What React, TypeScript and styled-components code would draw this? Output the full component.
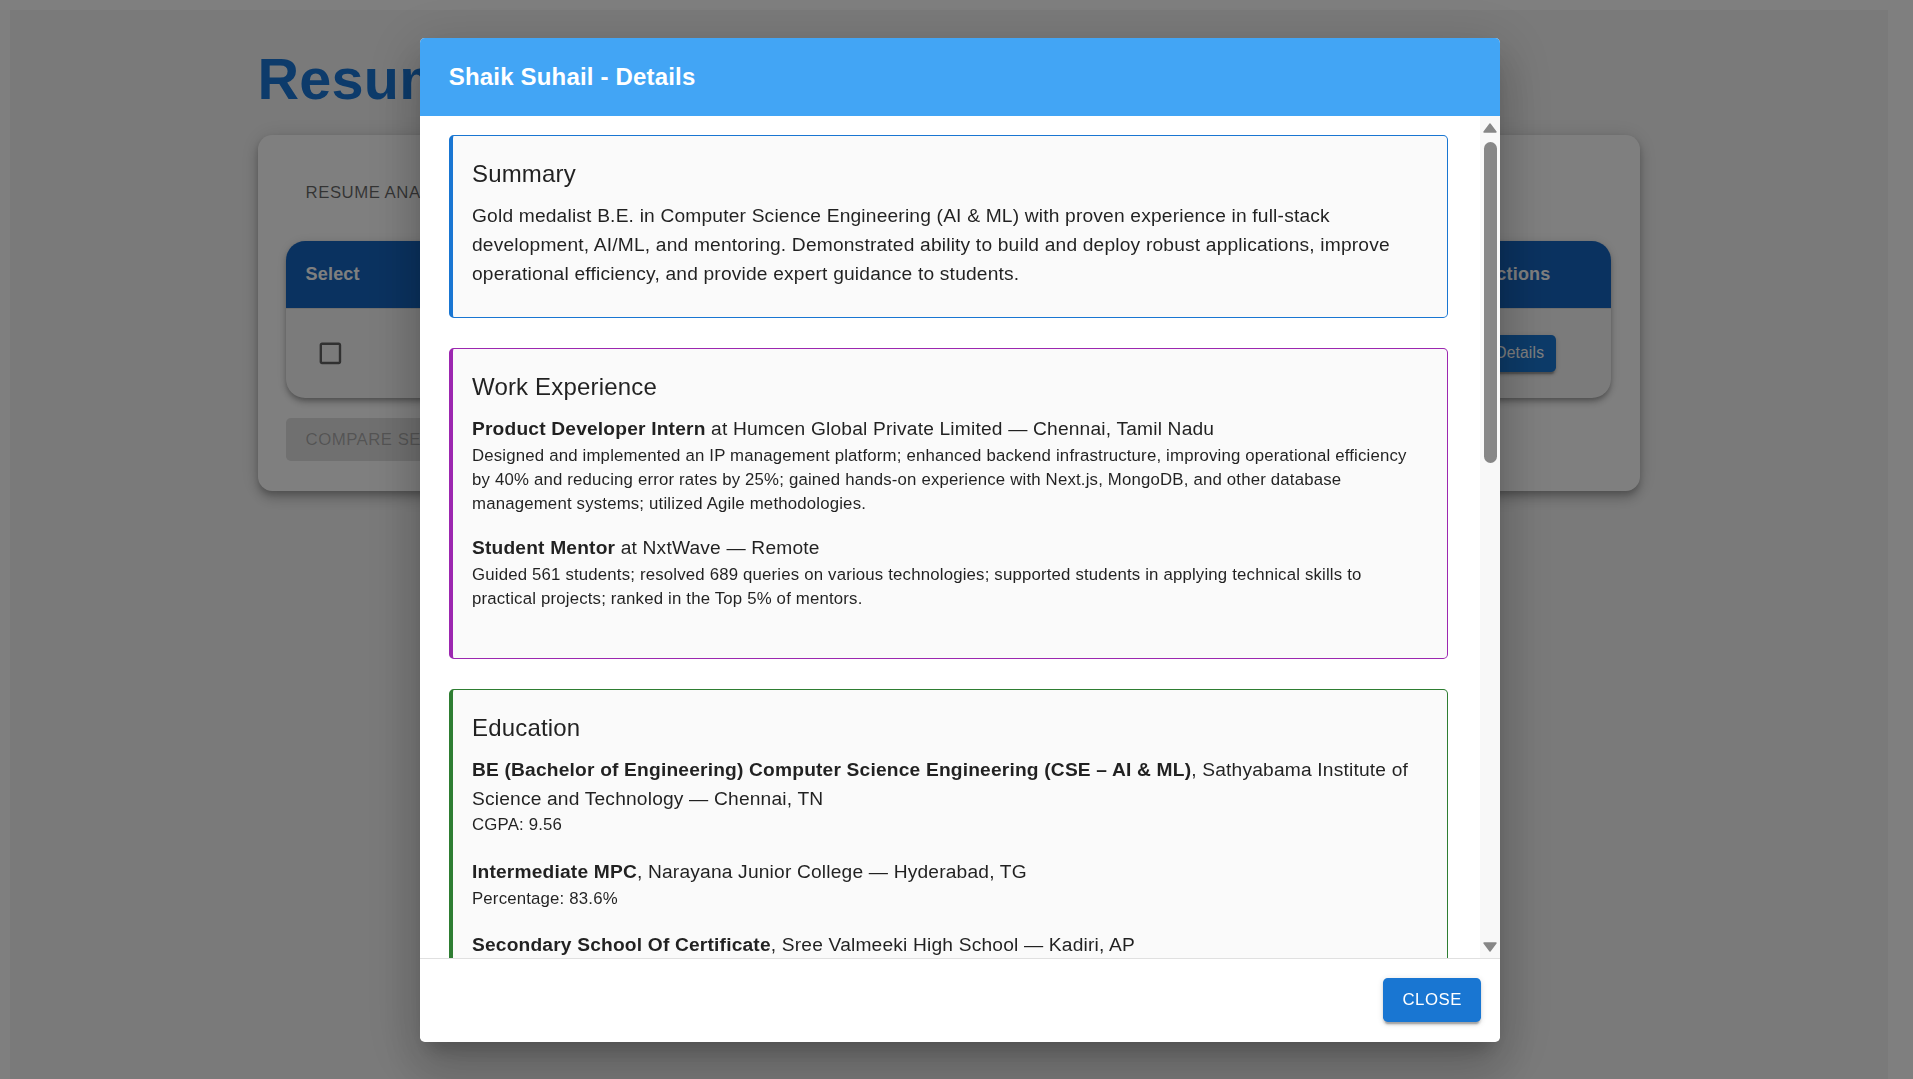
import styled, { createGlobalStyle } from 'styled-components'

const GlobalStyle = createGlobalStyle`
  html, body {
    margin: 0;
    padding: 0;
    background: #ffffff;
    font-family: 'Liberation Sans', Arial, Helvetica, sans-serif;
    letter-spacing: 0.18px;
    color: rgba(0, 0, 0, 0.87);
  }
  * {
    box-sizing: border-box;
  }
`

// ---------- page behind the dialog ----------

const Page = styled.div`
  margin: 9.6px 25px 0 9.6px;
  min-height: calc(100vh - 9.6px);
  background: #f5f5f5;
  overflow: hidden;
`

const Container = styled.main`
  max-width: 1440px;
  margin: 0 auto;
  padding: 36.8px 28.8px;
`

const PageTitle = styled.h1`
  margin: 0 0 21.4px;
  font-size: 57.6px;
  line-height: 1.167;
  font-weight: 700;
  color: #1a77d6;
  white-space: nowrap;
`

const Panel = styled.section`
  background: #ffffff;
  border-radius: 14.4px;
  padding: 28.8px 28.8px 30px;
  box-shadow: 0 3.6px 6px -1.2px rgba(0, 0, 0, 0.2),
    0 7.2px 12px rgba(0, 0, 0, 0.14), 0 1.2px 21.6px rgba(0, 0, 0, 0.12);
`

const TabRow = styled.div`
  display: flex;
  margin-bottom: 19.2px;
`

const Tab = styled.div`
  height: 57.6px;
  padding: 0 19.2px;
  display: flex;
  align-items: center;
  font-size: 16.8px;
  text-transform: uppercase;
  letter-spacing: 0.5px;
  color: rgba(0, 0, 0, 0.6);
  white-space: nowrap;
`

const Table = styled.div`
  border-radius: 19.2px;
  overflow: hidden;
  background: #f7f7f7;
  box-shadow: 0 2.4px 4px -1px rgba(0, 0, 0, 0.2),
    0 4.8px 6px rgba(0, 0, 0, 0.14), 0 1.2px 12px rgba(0, 0, 0, 0.12);
`

const TableRow = styled.div<{ $head?: boolean }>`
  display: grid;
  grid-template-columns: 140px 1.4fr 1.6fr 1fr 1fr 147.2px;
  align-items: center;
  background: ${({ $head }) => ($head ? '#1565c0' : 'transparent')};
  color: ${({ $head }) => ($head ? '#ffffff' : 'rgba(0, 0, 0, 0.87)')};
  font-weight: ${({ $head }) => ($head ? 700 : 400)};
  font-size: ${({ $head }) => ($head ? '18px' : '16.8px')};
  border-bottom: 1px solid #e0e0e0;
  &:last-child {
    border-bottom: none;
  }
`

const Cell = styled.div`
  padding: 19.2px;
  line-height: 28.8px;
  white-space: nowrap;
  overflow: hidden;
`

const CheckCell = styled.div`
  padding: 19.2px;
`

const CheckBox = styled.span`
  display: inline-flex;
  padding: 10.8px;
  svg {
    display: block;
  }
`

const SmallButton = styled.button`
  border: none;
  border-radius: 4.8px;
  background: #1976d2;
  color: #ffffff;
  font-family: inherit;
  font-size: 15.6px;
  line-height: 1.75;
  letter-spacing: 0.18px;
  padding: 4.8px 12px;
  box-shadow: 0 3.6px 1.2px -2.4px rgba(0, 0, 0, 0.2),
    0 2.4px 2.4px rgba(0, 0, 0, 0.14), 0 1.2px 6px rgba(0, 0, 0, 0.12);
`

const CompareButton = styled.button`
  margin-top: 20px;
  border: none;
  border-radius: 4.8px;
  background: rgba(0, 0, 0, 0.12);
  color: rgba(0, 0, 0, 0.26);
  font-family: inherit;
  font-size: 16.8px;
  line-height: 1.75;
  letter-spacing: 0.48px;
  padding: 7.2px 19.2px;
  text-transform: uppercase;
`

// ---------- dialog ----------

const Overlay = styled.div`
  position: fixed;
  inset: 0;
  background: rgba(0, 0, 0, 0.5);
  display: flex;
  align-items: center;
  justify-content: center;
`

const Dialog = styled.div`
  width: 1080px;
  height: 1004px;
  margin-left: 7px;
  background: #ffffff;
  border-radius: 4.8px;
  overflow: hidden;
  display: flex;
  flex-direction: column;
  box-shadow: 0 13px 18px -8px rgba(0, 0, 0, 0.2),
    0 29px 46px 4px rgba(0, 0, 0, 0.14), 0 11px 55px 10px rgba(0, 0, 0, 0.12);
`

const DialogHeader = styled.header`
  flex: none;
  height: 78px;
  padding: 1px 28.8px 0;
  background: #42a5f5;
  display: flex;
  align-items: center;
`

const DialogTitle = styled.h2`
  margin: 0;
  font-size: 24px;
  line-height: 1.6;
  font-weight: 700;
  color: #ffffff;
`

const DialogBody = styled.div`
  flex: 1;
  min-height: 0;
  display: flex;
`

const ScrollArea = styled.div`
  flex: 1;
  overflow: hidden;
  padding: 19.5px 32px 0 28.8px;
`

const Section = styled.section<{ $accent: string }>`
  background: #fafafa;
  border: 1px solid ${({ $accent }) => $accent};
  border-left-width: 4px;
  border-radius: 4.8px;
  padding: 19.2px 29px 29px 19.2px;
  margin-bottom: 29.5px;
`

const SectionTitle = styled.h3`
  margin: 0 0 8.4px;
  font-size: 24px;
  line-height: 1.6;
  font-weight: 400;
`

const BodyText = styled.p`
  margin: 0;
  font-size: 19.2px;
  line-height: 1.5;
`

const Entry = styled.div<{ $gap: number }>`
  margin-bottom: ${({ $gap }) => $gap}px;
`

const EntryHead = styled.p`
  margin: 0;
  font-size: 19.2px;
  line-height: 1.5;
  strong {
    font-weight: 700;
  }
`

const EntryText = styled.p`
  margin: 0;
  font-size: 16.8px;
  line-height: 24px;
`

const ScrollTrack = styled.div`
  flex: none;
  width: 20px;
  background: #f8f8f8;
  display: flex;
  flex-direction: column;
  align-items: center;
  padding: 7px 0 6px;
`

const ScrollThumb = styled.div`
  width: 13px;
  height: 321px;
  margin-top: 9px;
  border-radius: 7px;
  background: #878787;
`

const TrackSpacer = styled.div`
  flex: 1;
`

const DialogFooter = styled.footer`
  flex: none;
  height: 84px;
  border-top: 1px solid #e0e0e0;
  padding: 0 19px;
  display: flex;
  align-items: center;
  justify-content: flex-end;
`

const CloseButton = styled.button`
  border: none;
  border-radius: 4.8px;
  background: #1976d2;
  color: #ffffff;
  font-family: inherit;
  font-size: 16.8px;
  line-height: 1.75;
  letter-spacing: 0.48px;
  padding: 7.2px 19.2px;
  text-transform: uppercase;
  box-shadow: 0 3.6px 1.2px -2.4px rgba(0, 0, 0, 0.2),
    0 2.4px 2.4px rgba(0, 0, 0, 0.14), 0 1.2px 6px rgba(0, 0, 0, 0.12);
`

const Arrow = ({ up }: { up?: boolean }) => (
  <svg width="14" height="10" viewBox="0 0 14 10">
    <path
      d={up ? 'M7 1 L13 9 L1 9 Z' : 'M1 1 L13 1 L7 9 Z'}
      fill="#878787"
      stroke="#878787"
      strokeWidth="1.4"
      strokeLinejoin="round"
    />
  </svg>
)

const CheckIcon = () => (
  <svg width="28.8" height="28.8" viewBox="0 0 24 24">
    <path
      fill="rgba(0,0,0,0.6)"
      d="M19 5v14H5V5h14m0-2H5c-1.1 0-2 .9-2 2v14c0 1.1.9 2 2 2h14c1.1 0 2-.9 2-2V5c0-1.1-.9-2-2-2z"
    />
  </svg>
)

const work = [
  {
    role: 'Product Developer Intern',
    at: ' at Humcen Global Private Limited — Chennai, Tamil Nadu',
    text: 'Designed and implemented an IP management platform; enhanced backend infrastructure, improving operational efficiency by 40% and reducing error rates by 25%; gained hands-on experience with Next.js, MongoDB, and other database management systems; utilized Agile methodologies.',
  },
  {
    role: 'Student Mentor',
    at: ' at NxtWave — Remote',
    text: 'Guided 561 students; resolved 689 queries on various technologies; supported students in applying technical skills to practical projects; ranked in the Top 5% of mentors.',
  },
]

const education = [
  {
    degree: 'BE (Bachelor of Engineering) Computer Science Engineering (CSE – AI & ML)',
    place: ', Sathyabama Institute of Science and Technology — Chennai, TN',
    score: 'CGPA: 9.56',
  },
  {
    degree: 'Intermediate MPC',
    place: ', Narayana Junior College — Hyderabad, TG',
    score: 'Percentage: 83.6%',
  },
  {
    degree: 'Secondary School Of Certificate',
    place: ', Sree Valmeeki High School — Kadiri, AP',
    score: 'GPA: 9.3',
  },
]

function App() {
  return (
    <>
      <GlobalStyle />
      <Page>
        <Container>
          <PageTitle>Resume Analyzer</PageTitle>
          <Panel>
            <TabRow>
              <Tab>Resume Analysis</Tab>
            </TabRow>
            <Table>
              <TableRow $head>
                <Cell>Select</Cell>
                <Cell>Name</Cell>
                <Cell>Email</Cell>
                <Cell>Score</Cell>
                <Cell>Skills</Cell>
                <Cell>Actions</Cell>
              </TableRow>
              <TableRow>
                <CheckCell>
                  <CheckBox>
                    <CheckIcon />
                  </CheckBox>
                </CheckCell>
                <Cell>Shaik Suhail</Cell>
                <Cell>shaik.suhail@mail.com</Cell>
                <Cell>86</Cell>
                <Cell>React, Node</Cell>
                <Cell>
                  <SmallButton>Details</SmallButton>
                </Cell>
              </TableRow>
            </Table>
            <CompareButton disabled>Compare Selected</CompareButton>
          </Panel>
        </Container>
      </Page>

      <Overlay>
        <Dialog>
          <DialogHeader>
            <DialogTitle>Shaik Suhail - Details</DialogTitle>
          </DialogHeader>
          <DialogBody>
            <ScrollArea>
              <Section $accent="#1976d2">
                <SectionTitle>Summary</SectionTitle>
                <BodyText>
                  Gold medalist B.E. in Computer Science Engineering (AI &amp; ML)
                  with proven experience in full-stack development, AI/ML, and
                  mentoring. Demonstrated ability to build and deploy robust
                  applications, improve operational efficiency, and provide
                  expert guidance to students.
                </BodyText>
              </Section>

              <Section $accent="#9c27b0">
                <SectionTitle>Work Experience</SectionTitle>
                {work.map((job) => (
                  <Entry key={job.role} $gap={18.5}>
                    <EntryHead>
                      <strong>{job.role}</strong>
                      {job.at}
                    </EntryHead>
                    <EntryText>{job.text}</EntryText>
                  </Entry>
                ))}
              </Section>

              <Section $accent="#2e7d32">
                <SectionTitle>Education</SectionTitle>
                {education.map((ed) => (
                  <Entry key={ed.degree} $gap={20.5}>
                    <EntryHead>
                      <strong>{ed.degree}</strong>
                      {ed.place}
                    </EntryHead>
                    <EntryText>{ed.score}</EntryText>
                  </Entry>
                ))}
              </Section>
            </ScrollArea>
            <ScrollTrack>
              <Arrow up />
              <ScrollThumb />
              <TrackSpacer />
              <Arrow />
            </ScrollTrack>
          </DialogBody>
          <DialogFooter>
            <CloseButton>Close</CloseButton>
          </DialogFooter>
        </Dialog>
      </Overlay>
    </>
  )
}

export default App
